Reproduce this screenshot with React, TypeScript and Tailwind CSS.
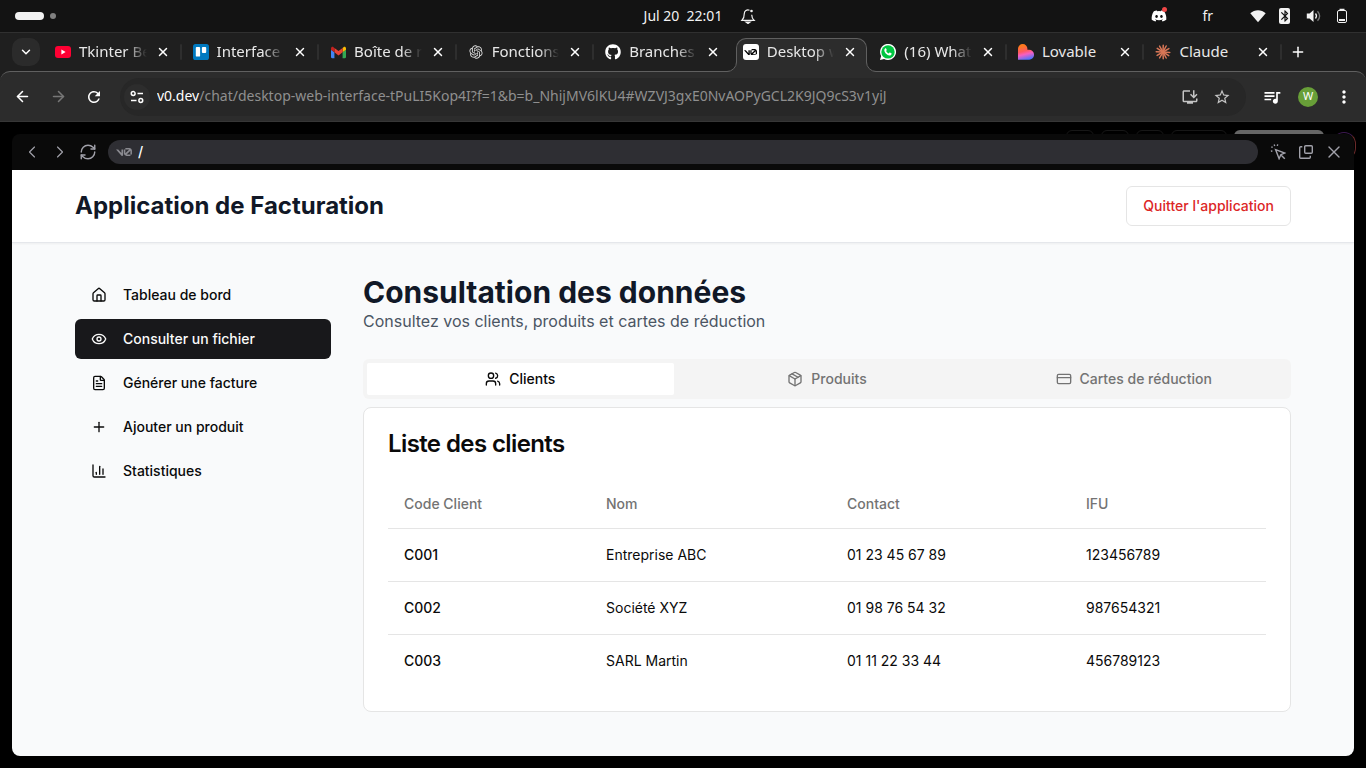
import { useState } from "react";
import type { ReactNode } from "react";
import {
  ArrowLeft,
  ArrowRight,
  ChartColumn,
  ChevronDown,
  ChevronLeft,
  ChevronRight,
  CreditCard,
  Eye,
  FileText,
  House,
  Package,
  Plus,
  RefreshCw,
  Users,
  X,
} from "lucide-react";
import { FaDiscord, FaGithub } from "react-icons/fa";
import { RiOpenaiFill } from "react-icons/ri";
import {
  MdBluetooth,
  MdOutlineInstallDesktop,
  MdQueueMusic,
  MdMoreVert,
  MdRefresh,
  MdStarOutline,
} from "react-icons/md";

function YoutubeIcon() {
  return (
    <svg viewBox="0 0 16 16" className="size-4">
      <rect x="0" y="2" width="16" height="12" rx="3" fill="#ff0033" />
      <path d="M6.4 5.6v4.8L10.6 8z" fill="#fff" />
    </svg>
  );
}

function TrelloIcon() {
  return (
    <svg viewBox="0 0 16 16" className="size-4">
      <rect width="16" height="16" rx="2.6" fill="#0079bf" />
      <rect x="2.8" y="3" width="4.3" height="9.6" rx="0.9" fill="#fff" />
      <rect x="8.9" y="3" width="4.3" height="5.9" rx="0.9" fill="#fff" />
    </svg>
  );
}

function GmailIcon() {
  return (
    <svg viewBox="52 42 88 66" className="size-[15px]">
      <path fill="#4285f4" d="M58 108h14V74L52 59v43c0 3.32 2.69 6 6 6" />
      <path fill="#34a853" d="M120 108h14c3.32 0 6-2.69 6-6V59l-20 15" />
      <path fill="#fbbc04" d="M120 48v26l20-15v-8c0-7.42-8.47-11.65-14.4-7.2" />
      <path fill="#ea4335" d="M72 74V48l24 18 24-18v26L96 92" />
      <path fill="#c5221f" d="M52 51v8l20 15V48l-5.6-4.2c-5.94-4.45-14.4-.22-14.4 7.2" />
    </svg>
  );
}

function VercelMark({ className }: { className: string }) {
  return (
    <svg viewBox="0 0 40 20" className={className} fill="currentColor">
      <path d="M23.3919 0H32.9188C36.7819 0 39.9136 3.13165 39.9136 6.99475V16.0805H36.0006V6.99475C36.0006 6.90167 35.9969 6.80925 35.9898 6.71766L26.4628 16.079C26.4949 16.08 26.5272 16.0805 26.5595 16.0805H36.0006V19.7762H26.5595C22.6964 19.7762 19.4788 16.6139 19.4788 12.7508V3.68923H23.3919V12.7508C23.3919 12.9253 23.4054 13.0977 23.4316 13.2668L33.1682 3.6995C33.0861 3.6927 33.003 3.68923 32.9188 3.68923H23.3919V0Z" />
      <path d="M13.7688 19.0956L0 3.68759H5.53933L13.6231 12.7337V3.68759H17.7535V17.5746C17.7535 19.6705 15.1654 20.6584 13.7688 19.0956Z" />
    </svg>
  );
}

function V0Icon() {
  return (
    <span className="flex size-4 items-center justify-center rounded-[3px] bg-white text-black">
      <VercelMark className="w-[13px]" />
    </span>
  );
}

function WhatsappIcon() {
  return (
    <svg viewBox="0 0 16 16" className="size-4">
      <path d="M0 16l1.1-4.1A8 8 0 1 1 4.1 14.9z" fill="#fff" />
      <circle cx="8" cy="7.9" r="6.7" fill="#00c641" />
      <path
        d="M5.1 4.4c.3-.3.8-.3 1 .1l.6 1.3c.1.3 0 .5-.2.7l-.4.5c.6 1.2 1.4 1.9 2.6 2.5l.6-.7c.2-.2.4-.3.7-.2l1.3.7c.3.2.4.4.3.8-.2.9-1.1 1.6-2.1 1.5C7 11.3 4.5 8.7 4.3 6.3c0-.8.3-1.5.8-1.9z"
        fill="#fff"
      />
    </svg>
  );
}

function LovableIcon() {
  return (
    <svg viewBox="0 0 16 16" className="size-4">
      <defs>
        <linearGradient id="heart" x1="4" y1="0" x2="8" y2="16" gradientUnits="userSpaceOnUse">
          <stop offset="0.1" stopColor="#ff7a1a" />
          <stop offset="0.45" stopColor="#ff5a5f" />
          <stop offset="0.65" stopColor="#f75fc0" />
          <stop offset="1" stopColor="#4b73ff" />
        </linearGradient>
      </defs>
      <path
        d="M4.7 0a4.7 4.7 0 0 1 4.7 4.7v1.1h1.7a4.85 4.85 0 0 1 0 9.9H0V4.7A4.7 4.7 0 0 1 4.7 0z"
        fill="url(#heart)"
      />
    </svg>
  );
}

function ClaudeIcon() {
  const rays = [4, 32, 62, 88, 120, 150, 182, 212, 240, 272, 298, 330];
  return (
    <svg viewBox="-8 -8 16 16" className="size-4" stroke="#d97757" strokeWidth="1.5" strokeLinecap="round">
      {rays.map((angle) => (
        <line key={angle} x1="0" y1="0" x2="6.8" y2="0" transform={`rotate(${angle})`} />
      ))}
    </svg>
  );
}

type BrowserTab = { title: string; icon: ReactNode; active?: boolean; short?: boolean };

const browserTabs: BrowserTab[] = [
  { title: "Tkinter Be", icon: <YoutubeIcon /> },
  { title: "Interface", icon: <TrelloIcon /> },
  { title: "Boîte de r", icon: <GmailIcon /> },
  { title: "Fonctions", icon: <RiOpenaiFill className="size-4 text-[#dddddd]" /> },
  { title: "Branches", icon: <FaGithub className="size-4 text-white" /> },
  { title: "Desktop w", icon: <V0Icon />, active: true },
  { title: "(16) What", icon: <WhatsappIcon /> },
  { title: "Lovable", icon: <LovableIcon />, short: true },
  { title: "Claude", icon: <ClaudeIcon />, short: true },
];

function TabFlare({ side }: { side: "left" | "right" }) {
  const left = side === "left";
  return (
    <svg
      viewBox="0 0 10 10"
      className={left ? "absolute -left-[10px] bottom-0 size-[10px]" : "absolute -right-[10px] bottom-0 size-[10px]"}
    >
      <path d={left ? "M10 0v10H0v-.5A9.5 9.5 0 0 0 9.5 0z" : "M0 0v10h10v-.5A9.5 9.5 0 0 1 .5 0z"} fill="#2c2c2c" />
      <path d={left ? "M0 9.5A9.5 9.5 0 0 0 9.5 0" : "M10 9.5A9.5 9.5 0 0 1 .5 0"} fill="none" stroke="#606060" />
    </svg>
  );
}

function SystemBar() {
  return (
    <header className="grid h-8 shrink-0 grid-cols-3 items-center bg-[#131313] text-[14px] text-[#f2f2f2]">
      <div className="flex items-center gap-1.5 pl-[15px]">
        <span className="h-2 w-[29px] rounded-full bg-[#f2f2f2]" />
        <span className="size-1.5 rounded-full bg-[#808080]" />
      </div>
      <div className="flex items-center justify-center gap-[18px] pl-[34px]">
        <time className="pb-0.5 whitespace-pre">Jul 20  22:01</time>
        <svg viewBox="0 0 16 16" className="size-4" fill="none" stroke="#f2f2f2" strokeWidth="1.2">
          <path d="M9.5 2.2C6.8 1.2 4.3 2.8 4.3 5.6c0 3.4-.5 5-2.3 6.7h12c-1.7-1.5-2.2-3.2-2.3-5.5" />
          <circle cx="11.5" cy="3" r="1.3" fill="#f2f2f2" stroke="none" />
          <path d="M6 14h4l-2 1.5z" fill="#f2f2f2" />
        </svg>
      </div>
      <div className="flex items-center justify-end pr-4">
        <span className="relative mr-[35px] flex">
          <FaDiscord className="size-4 text-white" />
          <span className="absolute -top-px right-0 size-[5px] rounded-full bg-[#f04747]" />
        </span>
        <span className="mr-[37px] pb-0.5">fr</span>
        <svg viewBox="0 0 16 16" className="mr-[13px] size-4" fill="#f2f2f2">
          <path d="M.3 5.2C4.7 1.3 11.3 1.3 15.7 5.2L8 14.2z" />
        </svg>
        <span className="mr-4 flex h-4 w-[11px] items-center justify-center rounded-[2px] bg-[#f2f2f2]">
          <MdBluetooth className="size-3.5 shrink-0 text-[#131313]" />
        </span>
        <svg viewBox="0 0 16 16" className="mr-3 size-4" fill="none" stroke="#f2f2f2" strokeWidth="1.3">
          <path d="M.8 5.5h2.800L7.500 2v12L3.600 10.500H.8z" fill="#f2f2f2" stroke="none" />
          <path d="M9.500 5.500c1.200 1.500 1.200 3.500 0 5" />
          <path d="M11.500 3.200c2.600 2.900 2.600 6.700 0 9.600" stroke="#777" />
        </svg>
        <svg viewBox="0 0 16 16" className="size-4" fill="none" stroke="#f2f2f2">
          <rect x="3.500" y="2.500" width="9" height="12" rx="1.500" />
          <path d="M5.500 1.500h5" strokeWidth="1.500" />
          <path d="M5 11h6v2H5z" fill="#f2f2f2" stroke="none" />
        </svg>
      </div>
    </header>
  );
}

function TabStrip() {
  return (
    <div className="flex h-[39px] shrink-0 items-stretch border-t border-[#303030] bg-[#1f1f1f]">
      <div className="flex w-11 shrink-0 items-center pl-3">
        <button aria-label="Rechercher des onglets" className="flex size-7 items-center justify-center rounded-[10px] bg-[#2b2b2b] text-white">
          <ChevronDown className="size-3.5" strokeWidth={2.5} />
        </button>
      </div>
      <div className="grid w-[1238px] shrink grid-cols-9">
        {browserTabs.map((tab, index) => {
          const nextActive = browserTabs[index + 1]?.active;
          return (
            <div key={tab.title} className="relative flex min-w-0 items-center pr-[11px] pl-[11px]">
              {tab.active && (
                <div className="absolute top-[5px] right-0.5 -bottom-px left-1 z-10 rounded-t-[10px] border border-b-0 border-[#606060] bg-[#2c2c2c]">
                  <TabFlare side="left" />
                  <TabFlare side="right" />
                </div>
              )}
              <span className="relative z-20 flex size-4 shrink-0 items-center justify-center">{tab.icon}</span>
              <span
                className={
                  tab.short
                    ? "relative z-20 ml-2 min-w-0 flex-1 overflow-hidden pb-0.5 text-[15px] leading-5 whitespace-nowrap text-[#e8e8e8]"
                    : "relative z-20 ml-2 min-w-0 flex-1 overflow-hidden mask-r-from-70% pb-0.5 text-[15px] leading-5 whitespace-nowrap text-[#e8e8e8]"
                }
              >
                {tab.title}
              </span>
              <button aria-label={`Fermer ${tab.title}`} className="relative z-20 ml-2 flex size-4 shrink-0 items-center justify-center text-white">
                <X className="size-3.5" strokeWidth={2.5} />
              </button>
              {!tab.active && !nextActive && <span className="absolute right-0 h-4 w-0.5 rounded-full bg-[#2e2e2e]" />}
            </div>
          );
        })}
      </div>
      <button aria-label="Nouvel onglet" className="flex w-8 shrink-0 items-center justify-center text-white">
        <Plus className="size-4" strokeWidth={2.2} />
      </button>
    </div>
  );
}

function AddressBar() {
  return (
    <div className="bg-[#1f1f1f]">
      <div className="flex h-[51px] items-center rounded-t-[10px] border-t border-b border-t-[#606060] border-b-[#363636] bg-[#2c2c2c] pr-3 pl-[13px] text-white">
        <button aria-label="Page précédente" className="flex size-[18px] items-center justify-center">
          <ArrowLeft className="size-[17px]" strokeWidth={2.2} />
        </button>
        <button aria-label="Page suivante" className="ml-[18px] flex size-[18px] items-center justify-center text-[#777777]">
          <ArrowRight className="size-[17px]" strokeWidth={2.2} />
        </button>
        <button aria-label="Actualiser" className="ml-[18px] flex size-[18px] items-center justify-center">
          <MdRefresh className="size-[18px]" />
        </button>
        <div className="ml-[17px] flex h-[38px] min-w-0 flex-1 items-center rounded-full bg-[#272727] pr-[15px] pl-1">
          <button aria-label="Informations sur le site" className="flex size-[26px] shrink-0 items-center justify-center rounded-full bg-[#2d2d2d]">
            <svg viewBox="0 0 14 14" className="size-3.5" fill="none" stroke="#fff" strokeWidth="1.5">
              <circle cx="3.2" cy="3.5" r="1.9" />
              <path d="M7.5 3.5H13M1 10.5h5.5" />
              <circle cx="10.8" cy="10.5" r="1.9" />
            </svg>
          </button>
          <p className="ml-[7px] min-w-0 flex-1 truncate pb-0.5 text-[14px] text-[#8f8f8f]">
            <span className="text-white">v0.dev</span>/chat/desktop-web-interface-tPuLI5Kop4I?f=1&amp;b=b_NhijMV6lKU4#WZVJ3gxE0NvAOPyGCL2K9JQ9cS3v1yiJ
          </p>
          <button aria-label="Installer l'application" className="flex shrink-0 text-[#c4c4c4]">
            <MdOutlineInstallDesktop className="size-[18px]" />
          </button>
          <button aria-label="Ajouter aux favoris" className="ml-3.5 flex shrink-0 text-[#c4c4c4]">
            <MdStarOutline className="size-[18px]" />
          </button>
        </div>
        <button aria-label="Commandes multimédias" className="ml-4 flex shrink-0">
          <MdQueueMusic className="size-5" />
        </button>
        <button aria-label="Profil" className="ml-4 flex size-5 shrink-0 items-center justify-center rounded-full bg-[#689f38] text-[11px]">
          W
        </button>
        <button aria-label="Menu" className="ml-4 flex shrink-0">
          <MdMoreVert className="size-5" />
        </button>
      </div>
    </div>
  );
}

function BackdropHeader() {
  return (
    <div className="absolute inset-x-0 top-2 flex items-start justify-end gap-[7px] pr-2.5">
      <span className="h-7 w-7 rounded-md border border-[#171717]" />
      <span className="h-7 w-7 rounded-md border border-[#171717]" />
      <span className="h-7 w-7 rounded-md border border-[#171717]" />
      <span className="h-7 w-14 rounded-md border border-[#171717]" />
      <span className="h-7 w-[90px] rounded-md bg-[#666666]" />
      <span className="mt-0.5 ml-px h-7 w-6 rounded-full border border-t-[#3d1a52] border-r-[#6b2a2a] border-b-transparent border-l-transparent" />
    </div>
  );
}

function PreviewBar() {
  return (
    <div className="flex h-9 shrink-0 items-center bg-[#0a0a0a] px-3 text-[#a1a1aa]">
      <button aria-label="Précédent" className="flex size-4 items-center justify-center">
        <ChevronLeft className="size-5 shrink-0" strokeWidth={1.4} />
      </button>
      <button aria-label="Suivant" className="ml-3 flex size-4 items-center justify-center">
        <ChevronRight className="size-5 shrink-0" strokeWidth={1.4} />
      </button>
      <button aria-label="Recharger l'aperçu" className="ml-3 flex size-4 items-center justify-center">
        <RefreshCw className="size-[18px] shrink-0" strokeWidth={1.9} />
      </button>
      <div className="ml-3 flex h-6 min-w-0 flex-1 items-center gap-1.5 rounded-full bg-[#2e2e33] px-2">
        <VercelMark className="w-4 shrink-0 text-[#8a8a90]" />
        <input
          aria-label="Adresse de l'aperçu"
          defaultValue="/"
          className="min-w-0 flex-1 bg-transparent pb-0.5 font-[Inter,sans-serif] text-[14px] font-medium text-white outline-none"
        />
      </div>
      <button aria-label="Sélectionner un élément" className="ml-3 flex size-4 items-center justify-center">
        <svg viewBox="0 0 16 16" className="size-4" fill="none" stroke="currentColor" strokeWidth="1.4">
          <path d="M5.6 5.6l9.2 3.4-4 1.7-1.7 4z" />
          <path d="M11.2 11.2l3.6 3.600" />
          <path d="M1.200 3.100h1.600M4.200.6l.5 1.400M7.700.4l-.4 1.500M.9 7.300l1.500-.4" />
        </svg>
      </button>
      <button aria-label="Ouvrir dans une fenêtre" className="ml-3 flex size-4 items-center justify-center">
        <svg viewBox="0 0 16 16" className="size-4" fill="none" stroke="currentColor" strokeWidth="1.4">
          <rect x="6.700" y="1.700" width="7.600" height="7.600" rx="1" />
          <path d="M4.300 2.700H2.700a1 1 0 0 0-1 1v9.600a1 1 0 0 0 1 1h8.600a1 1 0 0 0 1-1v-1.600" />
        </svg>
      </button>
      <button aria-label="Fermer l'aperçu" className="ml-3 flex size-4 items-center justify-center">
        <X className="size-5 shrink-0" strokeWidth={1.600} />
      </button>
    </div>
  );
}

const navItems = [
  { label: "Tableau de bord", Icon: House },
  { label: "Consulter un fichier", Icon: Eye },
  { label: "Générer une facture", Icon: FileText },
  { label: "Ajouter un produit", Icon: Plus },
  { label: "Statistiques", Icon: ChartColumn },
];

const dataTabs = [
  { label: "Clients", Icon: Users },
  { label: "Produits", Icon: Package },
  { label: "Cartes de réduction", Icon: CreditCard },
];

const clients = [
  { code: "C001", name: "Entreprise ABC", contact: "01 23 45 67 89", ifu: "123456789" },
  { code: "C002", name: "Société XYZ", contact: "01 98 76 54 32", ifu: "987654321" },
  { code: "C003", name: "SARL Martin", contact: "01 11 22 33 44", ifu: "456789123" },
];

function InvoiceApp() {
  const [page, setPage] = useState("Consulter un fichier");
  const [dataTab, setDataTab] = useState("Clients");

  return (
    <div className="flex-1 bg-gray-50 font-[Inter,sans-serif] text-[#0a0a0a]">
      <div className="border-b border-gray-200 bg-white shadow-xs">
        <div className="mx-auto flex max-w-7xl items-center justify-between px-8 py-4">
          <h1 className="text-2xl font-bold text-[#111827]">Application de Facturation</h1>
          <button className="h-10 rounded-md border border-[#e5e5e5] bg-white px-4 text-sm font-medium text-[#dc2626]">
            Quitter l'application
          </button>
        </div>
      </div>
      <div className="mx-auto flex max-w-7xl gap-8 px-8 py-8">
        <nav className="flex w-64 shrink-0 flex-col gap-1">
          {navItems.map(({ label, Icon }) => (
            <button
              key={label}
              onClick={() => setPage(label)}
              className={
                page === label
                  ? "flex h-10 items-center gap-4 rounded-md bg-[#18181b] px-4 text-sm font-medium text-[#fafafa]"
                  : "flex h-10 items-center gap-4 rounded-md px-4 text-sm font-medium"
              }
            >
              <Icon className="size-4" />
              {label}
            </button>
          ))}
        </nav>
        <main className="min-w-0 flex-1">
          <h2 className="text-3xl leading-[34px] font-bold text-[#111827]">Consultation des données</h2>
          <p className="text-base text-[#4b5563]">Consultez vos clients, produits et cartes de réduction</p>
          <div role="tablist" className="mt-[26px] grid h-10 grid-cols-3 rounded-md bg-[#f4f4f4] p-1">
            {dataTabs.map(({ label, Icon }) => (
              <button
                key={label}
                role="tab"
                aria-selected={dataTab === label}
                onClick={() => setDataTab(label)}
                className={
                  dataTab === label
                    ? "flex items-center justify-center gap-2 rounded-xs bg-white text-sm font-medium"
                    : "flex items-center justify-center gap-2 rounded-xs text-sm font-medium text-[#737373]"
                }
              >
                <Icon className="size-4" />
                {label}
              </button>
            ))}
          </div>
          <section className="mt-2 rounded-lg border border-[#e5e5e5] bg-white p-6">
            <h3 className="text-2xl leading-6 font-semibold tracking-tight">Liste des clients</h3>
            <table className="mt-6 w-full table-fixed text-left text-sm">
              <thead>
                <tr className="h-12 border-b border-[#e5e5e5] text-[#737373]">
                  <th className="w-[202px] px-4 font-medium">Code Client</th>
                  <th className="w-[241px] px-4 font-medium">Nom</th>
                  <th className="w-[239px] px-4 font-medium">Contact</th>
                  <th className="px-4 font-medium">IFU</th>
                </tr>
              </thead>
              <tbody>
                {clients.map((client) => (
                  <tr key={client.code} className="border-b border-[#e5e5e5] last:border-b-0">
                    <td className="p-4 font-medium">{client.code}</td>
                    <td className="p-4">{client.name}</td>
                    <td className="p-4">{client.contact}</td>
                    <td className="p-4">{client.ifu}</td>
                  </tr>
                ))}
              </tbody>
            </table>
          </section>
        </main>
      </div>
    </div>
  );
}

export default function App() {
  return (
    <div className="flex min-h-screen flex-col bg-black font-['Noto_Sans',sans-serif]">
      <SystemBar />
      <TabStrip />
      <AddressBar />
      <div className="relative flex flex-1 flex-col px-3 pt-3 pb-3">
        <BackdropHeader />
        <div className="relative flex flex-1 flex-col overflow-hidden rounded-lg">
          <PreviewBar />
          <InvoiceApp />
        </div>
      </div>
    </div>
  );
}
